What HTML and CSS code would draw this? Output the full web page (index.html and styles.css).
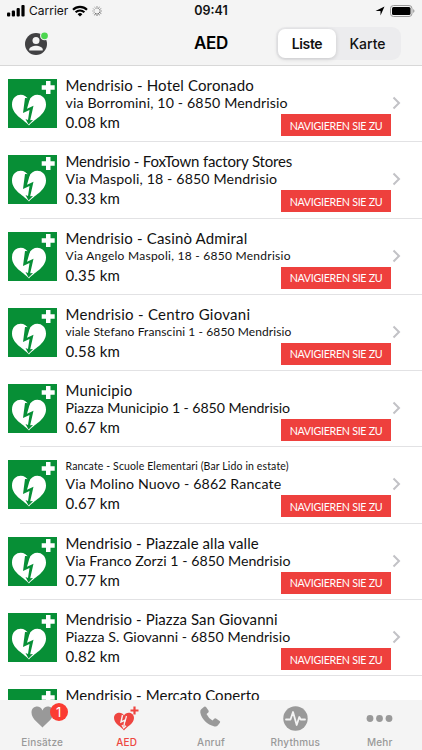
FILE: index.html
```html
<!DOCTYPE html>
<html lang="de">
<head>
    <meta charset="UTF-8">
    <meta name="viewport" content="width=device-width, initial-scale=1.0">
    <title>AED</title>
    <link rel="stylesheet" href="styles.css">
</head>
<body>
    <svg class="defs" width="0" height="0">
        <symbol id="aed" viewBox="0 0 49 49">
            <rect width="49" height="49" fill="#078f36"/>
            <path d="M38 2h4.500v4.300H46.700v4.400h-4.200V15H38v-4.300h-4.300V6.300H38z" fill="#fff"/>
            <path d="M21 46.500C17 41 4 36 4 25.500c0-11 13-13 17-4 4-9 17-7 17 4 0 10.500-13 15.500-17 21z" fill="#fff"/>
            <path d="M17 19l-2 15 6.500-3-1.500 10-2.500-1 3 5.500 4.500-4.500-2.800.3 3.300-14.500-6.500 3 3-10.500z" fill="#078f36"/>
        </symbol>
        <symbol id="chevron" viewBox="0 0 9 14">
            <path d="M1.500 1.500L7 7l-5.500 5.500" fill="none" stroke="#c2c2c6" stroke-width="2"/>
        </symbol>
    </svg>

    <div class="screen">
        <header class="header">
            <div class="status-bar">
                <div class="status-left">
                    <svg width="18" height="12" viewBox="0 0 18 12"><rect y="7.500" width="3.200" height="4" rx="1"/><rect x="4.800" y="5.500" width="3.200" height="6" rx="1"/><rect x="9.600" y="3" width="3.200" height="8.500" rx="1"/><rect x="14.400" y="0" width="3.200" height="11.500" rx="1"/></svg>
                    <span class="carrier">Carrier</span>
                    <svg class="wifi" width="16" height="12" viewBox="0 0 16 12"><path d="M1 4.700a10 10 0 0 1 14 0M3.600 7.300a6.200 6.200 0 0 1 8.800 0" fill="none" stroke="#000" stroke-width="2.100"/><path d="M8 11.500L5.600 9.200a3.400 3.400 0 0 1 4.800 0z"/></svg>
                    <svg class="spinner" width="10" height="10" viewBox="0 0 10 10" stroke="#999" stroke-width="1"><path d="M5 0v3M7.500.7L6.200 3M9.300 2.500L7 3.800M10 5H7"/><path d="M9.300 7.500L7 6.200M7.500 9.300L6.200 7M5 10V7M2.500 9.300L3.800 7" stroke="#777"/><path d="M.7 7.500L3 6.200M0 5h3M.7 2.500L3 3.800M2.500.7L3.800 3" stroke="#bbb"/></svg>
                </div>
                <span class="time">09:41</span>
                <div class="status-right">
                    <svg width="10" height="10" viewBox="0 0 10 10"><path d="M9.500.5L5.500 9.500V5H.5z"/></svg>
                    <svg width="25" height="12" viewBox="0 0 25 12"><rect x=".5" y=".5" width="21.500" height="11" rx="3" fill="none" stroke="#999"/><rect x="2" y="2" width="18.500" height="8" rx="1.500"/><path d="M23.200 4v4q1.300-.8 1.300-2t-1.300-2" fill="#999"/></svg>
                </div>
            </div>
            <div class="nav">
                <svg class="profile" width="25" height="25" viewBox="0 0 25 25">
                    <circle cx="11" cy="13" r="11" fill="#414143"/>
                    <circle cx="11" cy="9.600" r="3.500" fill="#f4f4f4"/>
                    <path d="M4.300 19.500v-1.200c0-2.300 4.300-3.500 6.700-3.500s6.700 1.200 6.700 3.500v1.200z" fill="#f4f4f4"/>
                    <circle cx="19.500" cy="4.800" r="4.500" fill="#f4f4f4"/>
                    <circle cx="19.500" cy="4.800" r="3.400" fill="#4cd64f"/>
                </svg>
                <h1>AED</h1>
                <div class="segmented">
                    <button class="segment active">Liste</button>
                    <button class="segment">Karte</button>
                </div>
            </div>
        </header>

        <main class="list">
            <div class="row">
                <svg class="aed-icon"><use href="#aed"/></svg>
                <div class="info">
                    <div class="name wide">Mendrisio - Hotel Coronado</div>
                    <div class="address wide">via Borromini, 10 - 6850 Mendrisio</div>
                    <div class="foot"><span class="distance">0.08 km</span><button class="navigate">NAVIGIEREN SIE ZU</button></div>
                </div>
                <svg class="chevron"><use href="#chevron"/></svg>
            </div>
            <div class="row">
                <svg class="aed-icon"><use href="#aed"/></svg>
                <div class="info">
                    <div class="name tight">Mendrisio - FoxTown factory Stores</div>
                    <div class="address wide">Via Maspoli, 18 - 6850 Mendrisio</div>
                    <div class="foot"><span class="distance">0.33 km</span><button class="navigate">NAVIGIEREN SIE ZU</button></div>
                </div>
                <svg class="chevron"><use href="#chevron"/></svg>
            </div>
            <div class="row">
                <svg class="aed-icon"><use href="#aed"/></svg>
                <div class="info">
                    <div class="name wide">Mendrisio - Casinò Admiral</div>
                    <div class="address medium">Via Angelo Maspoli, 18 - 6850 Mendrisio</div>
                    <div class="foot"><span class="distance">0.35 km</span><button class="navigate">NAVIGIEREN SIE ZU</button></div>
                </div>
                <svg class="chevron"><use href="#chevron"/></svg>
            </div>
            <div class="row">
                <svg class="aed-icon"><use href="#aed"/></svg>
                <div class="info">
                    <div class="name wider">Mendrisio - Centro Giovani</div>
                    <div class="address medium wide">viale Stefano Franscini 1 - 6850 Mendrisio</div>
                    <div class="foot"><span class="distance">0.58 km</span><button class="navigate">NAVIGIEREN SIE ZU</button></div>
                </div>
                <svg class="chevron"><use href="#chevron"/></svg>
            </div>
            <div class="row">
                <svg class="aed-icon"><use href="#aed"/></svg>
                <div class="info">
                    <div class="name wide">Municipio</div>
                    <div class="address tight">Piazza Municipio 1 - 6850 Mendrisio</div>
                    <div class="foot"><span class="distance">0.67 km</span><button class="navigate">NAVIGIEREN SIE ZU</button></div>
                </div>
                <svg class="chevron"><use href="#chevron"/></svg>
            </div>
            <div class="row">
                <svg class="aed-icon"><use href="#aed"/></svg>
                <div class="info">
                    <div class="name small">Rancate - Scuole Elementari (Bar Lido in estate)</div>
                    <div class="address wide">Via Molino Nuovo - 6862 Rancate</div>
                    <div class="foot"><span class="distance">0.67 km</span><button class="navigate">NAVIGIEREN SIE ZU</button></div>
                </div>
                <svg class="chevron"><use href="#chevron"/></svg>
            </div>
            <div class="row">
                <svg class="aed-icon"><use href="#aed"/></svg>
                <div class="info">
                    <div class="name">Mendrisio - Piazzale alla valle</div>
                    <div class="address">Via Franco Zorzi 1 - 6850 Mendrisio</div>
                    <div class="foot"><span class="distance">0.77 km</span><button class="navigate">NAVIGIEREN SIE ZU</button></div>
                </div>
                <svg class="chevron"><use href="#chevron"/></svg>
            </div>
            <div class="row">
                <svg class="aed-icon"><use href="#aed"/></svg>
                <div class="info">
                    <div class="name">Mendrisio - Piazza San Giovanni</div>
                    <div class="address">Piazza S. Giovanni - 6850 Mendrisio</div>
                    <div class="foot"><span class="distance">0.82 km</span><button class="navigate">NAVIGIEREN SIE ZU</button></div>
                </div>
                <svg class="chevron"><use href="#chevron"/></svg>
            </div>
            <div class="row">
                <svg class="aed-icon"><use href="#aed"/></svg>
                <div class="info">
                    <div class="name">Mendrisio - Mercato Coperto</div>
                </div>
            </div>
        </main>

        <nav class="tabs">
            <a class="tab">
                <span class="tab-icon">
                    <svg width="23" height="22" viewBox="0 0 23 22"><path d="M11.500 21.500C9 18 .5 13.500.5 6.500c0-7 9-8 11-2 2-6 11-5 11 2 0 7-8.500 11.500-11 15z" fill="#999"/></svg>
                    <span class="badge">1</span>
                </span>
                Einsätze
            </a>
            <a class="tab active">
                <span class="tab-icon">
                    <svg class="tab-aed" width="25" height="25" viewBox="0 0 25 25"><path d="M10 24.500C8 21 0 18 0 12 0 6 8 5 10 9.500 12 5 20 6 20 12c0 6-8 9-10 12.500z" fill="#ee4540"/><path d="M8.500 9l-1.500 7 4-1.800-1.200 6.500" fill="none" stroke="#f4f4f4" stroke-width="1.400"/><path d="M12.500 10L11 15.500M8 19l1.700 3 2.400-2.300" fill="none" stroke="#f4f4f4" stroke-width="1.200"/><path d="M20.500.5v8M16.500 4.500h8" stroke="#ee4540" stroke-width="2.200"/></svg>
                </span>
                AED
            </a>
            <a class="tab">
                <span class="tab-icon"><svg width="21" height="21" viewBox="0 0 21 21"><path d="M1.200 3.200L4.200.7q1-.7 1.800.3l2.500 3.600q.6 1-.2 1.800L6.500 8q1.800 4 6 6.400l1.700-1.700q.8-.8 1.800-.2l3.600 2.400q1 .8.300 1.800l-2.200 2.800q-1 1.200-3.200.9C7 18.800 1.600 13 .3 6.500Q0 4.300 1.200 3.200z" fill="#999"/></svg></span>
                Anruf
            </a>
            <a class="tab">
                <span class="tab-icon"><svg width="25" height="25" viewBox="0 0 25 25"><circle cx="12.500" cy="12.500" r="12.200" fill="#999"/><path d="M3 13.500h4.500L10 6l3.700 13 2.600-8 1.400 2.500H22" fill="none" stroke="#f4f4f4" stroke-width="1.800" stroke-linejoin="round" stroke-linecap="round"/></svg></span>
                Rhythmus
            </a>
            <a class="tab">
                <span class="tab-icon"><svg width="27" height="25" viewBox="0 0 27 25" fill="#999"><circle cx="4" cy="12.500" r="3.400"/><circle cx="13.500" cy="12.500" r="3.400"/><circle cx="23" cy="12.500" r="3.400"/></svg></span>
                Mehr
            </a>
        </nav>
    </div>
</body>
</html>
```

FILE: styles.css
```css
* {
    margin: 0;
    padding: 0;
    box-sizing: border-box;
}

body {
    font-family: Inter, "Liberation Sans", sans-serif;
    background: #fff;
    color: #111;
    overflow: hidden;
}

button {
    border: none;
    background: none;
    font-family: inherit;
}

svg {
    display: block;
    flex-shrink: 0;
}

.defs {
    position: absolute;
}

.screen {
    width: 422px;
    height: 750px;
    display: flex;
    flex-direction: column;
    overflow: hidden;
}

/* header */
.header {
    height: 66px;
    flex-shrink: 0;
    background: #f4f4f4;
    border-bottom: 1px solid #d8d8d8;
}

.status-bar {
    height: 21px;
    padding: 0 7px;
    display: grid;
    grid-template-columns: 1fr auto 1fr;
    align-items: center;
    color: #111;
}

.status-left,
.status-right {
    display: flex;
    align-items: center;
}

.status-right {
    justify-content: flex-end;
    gap: 5px;
}

.carrier {
    font-size: 12px;
    margin: 0 5px 0 4px;
}

.wifi {
    margin-left: -1px;
}

.spinner {
    margin-left: 4px;
}

.time {
    font-size: 12.5px;
    font-weight: 600;
}

.nav {
    height: 44px;
    padding: 0 21px;
    display: grid;
    grid-template-columns: 1fr auto 1fr;
    align-items: center;
}

.profile {
    margin-left: 4px;
}

.nav h1 {
    font-size: 17px;
    font-weight: 600;
    letter-spacing: -0.3px;
    color: #000;
}

.segmented {
    justify-self: end;
    width: 125px;
    height: 33px;
    padding: 2px;
    display: flex;
    background: #ececee;
    border-radius: 9px;
}

.segment {
    flex: 1;
    font-size: 14px;
    font-weight: 500;
    border-radius: 7px;
    color: #111;
}

.segment.active {
    flex: 0 0 58px;
    background: #fff;
    font-weight: 600;
    letter-spacing: -0.4px;
    box-shadow: 0 1px 4px rgba(0, 0, 0, 0.16);
}

/* list */
.list {
    flex: 1;
    min-height: 0;
    overflow: hidden;
    font-family: Lato, "Liberation Sans", sans-serif;
}

.row {
    height: 76.3px;
    padding: 10px 21px 0 8px;
    display: flex;
    background: linear-gradient(#e2e2e4, #e2e2e4) 20px 100% / 402px 1px no-repeat;
}

.aed-icon {
    width: 49px;
    height: 49px;
    margin-top: 3px;
}

.info {
    flex: 1;
    margin-left: 8.5px;
    white-space: nowrap;
}

.name,
.address {
    height: 18px;
    line-height: 18px;
    font-size: 15px;
    letter-spacing: 0.07px;
}

.address {
    font-size: 14.2px;
    letter-spacing: 0.03px;
}

.name.wide {
    letter-spacing: 0.16px;
}

.name.wider {
    letter-spacing: 0.26px;
}

.name.tight {
    letter-spacing: -0.17px;
}

.address.wide {
    letter-spacing: 0.13px;
}

.address.tight {
    letter-spacing: -0.09px;
}

.address.medium {
    font-size: 12px;
    letter-spacing: 0.26px;
}

.address.medium.wide {
    letter-spacing: 0.1px;
}

.name.small {
    font-size: 10.5px;
    letter-spacing: 0.13px;
}

.foot {
    display: flex;
    justify-content: space-between;
}

.distance {
    line-height: 20px;
    font-size: 15px;
    letter-spacing: 0.15px;
}

.navigate {
    width: 110px;
    height: 22px;
    margin-top: 2px;
    background: #ee403d;
    color: #fff;
    font-size: 10.7px;
    letter-spacing: -0.3px;
}

.chevron {
    width: 9px;
    height: 14px;
    margin: 20px 0 0 1px;
}

/* tab bar */
.tabs {
    height: 50px;
    flex-shrink: 0;
    display: grid;
    grid-template-columns: repeat(5, 1fr);
    background: #f4f4f4;
}

.tab {
    display: flex;
    flex-direction: column;
    align-items: center;
    padding-top: 5px;
    font-size: 10px;
    font-weight: 500;
    line-height: 12px;
    letter-spacing: 0.2px;
    color: #999;
}

.tab.active {
    color: #ee4540;
}

.tab-icon {
    position: relative;
    height: 31px;
    padding-top: 1px;
}

.badge {
    position: absolute;
    left: 19px;
    top: -2px;
    width: 18px;
    height: 18px;
    border-radius: 50%;
    background: #fb3b32;
    color: #fff;
    font-size: 13px;
    font-weight: 400;
    line-height: 18px;
    text-align: center;
}
```
